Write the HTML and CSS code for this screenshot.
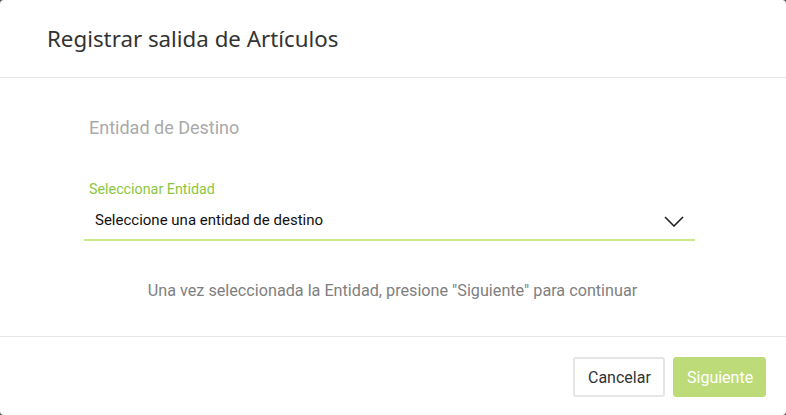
FILE: index.html
```html
<!DOCTYPE html>
<html lang="es">
<head>
<meta charset="utf-8">
<link rel="stylesheet" href="styles.css">
</head>
<body>
<div class="modal">
  <div class="modal-header">
    <h1 class="modal-title">Registrar salida de Artículos</h1>
  </div>
  <div class="modal-body">
    <div class="section-title">Entidad de Destino</div>
    <div class="field">
      <label class="field-label">Seleccionar Entidad</label>
      <div class="select">
        <span class="select-value">Seleccione una entidad de destino</span>
        <svg class="chevron" width="20" height="11" viewBox="0 0 20 11"><path d="M1 1 L10 10 L19 1" fill="none" stroke="#222" stroke-width="1.6"/></svg>
      </div>
    </div>
    <p class="hint">Una vez seleccionada la Entidad, presione "Siguiente" para continuar</p>
  </div>
  <div class="modal-footer">
    <button class="btn btn-default">Cancelar</button>
    <button class="btn btn-primary">Siguiente</button>
  </div>
</div>
</body>
</html>
```
FILE: styles.css
```css
html, body {
  margin: 0;
  padding: 0;
  background: #555;
  width: 786px;
  height: 415px;
  overflow: hidden;
}
.modal {
  width: 786px;
  height: 415px;
  background: #fff;
  border-radius: 4px;
  display: flex;
  flex-direction: column;
  font-family: Roboto, "Liberation Sans", sans-serif;
}
.modal-header {
  border-bottom: 1px solid #e5e5e5;
  padding: 0 47px;
  display: flex;
  align-items: center;
  box-sizing: border-box;
  height: 78px;
}
.modal-title {
  margin: 0;
  font-family: "Noto Sans", "Open Sans", sans-serif;
  font-weight: 400;
  font-size: 22.3px;
  color: #333;
}
.modal-body {
  height: 259px;
  box-sizing: border-box;
  border-bottom: 1px solid #e5e5e5;
  padding: 0 91px 0 84px;
}
.section-title {
  margin-top: 39px;
  padding-left: 5px;
  font-size: 18px;
  color: #aaa;
  line-height: 22px;
}
.field {
  margin-top: 41px;
}
.field-label {
  display: block;
  padding-left: 5px;
  font-size: 14.3px;
  color: #8cc63f;
  line-height: 18px;
}
.select {
  display: flex;
  align-items: center;
  justify-content: space-between;
  height: 43px;
  box-sizing: border-box;
  border-bottom: 2px solid #cce98a;
  padding: 3px 11px 0 11px;
}
.select-value {
  font-size: 15px;
  color: #111;
}
.chevron {
  display: block;
  position: relative;
  top: 1px;
}
.hint {
  margin: 40px 0 0 0;
  text-align: center;
  font-size: 16.2px;
  color: #808080;
  position: relative;
  left: 3px;
}
.modal-footer {
  flex: 1;
  display: flex;
  justify-content: flex-end;
  align-items: flex-start;
  gap: 8px;
  padding: 20px 20px 0 0;
}
.btn {
  height: 40px;
  border-radius: 3px;
  font-family: Roboto, "Liberation Sans", sans-serif;
  font-size: 16px;
  padding: 0 13px;
  box-sizing: border-box;
}
.btn-default {
  background: #fff;
  color: #333;
  border: 2px solid #e5e5e5;
  width: 92px;
}
.btn-primary {
  background: #bedb7a;
  color: #fff;
  border: 1px solid #bedb7a;
  width: 93px;
}
```
